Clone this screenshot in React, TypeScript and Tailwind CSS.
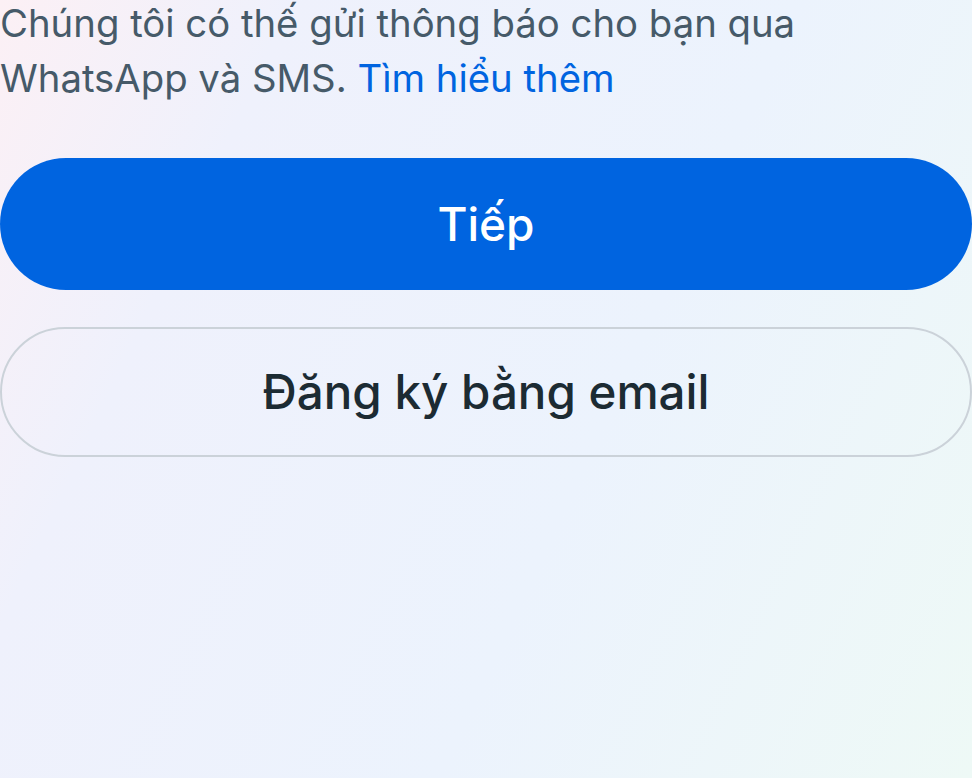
import React from "react";

export default function App() {
  return (
    <div
      className="w-[972px] h-[778px] overflow-hidden bg-[linear-gradient(115deg,#fcf0f5_0%,#eff1fc_22%,#ecf3fd_60%,#eef9f6_100%)]"
      style={{ fontFamily: "Inter, 'Noto Sans', sans-serif" }}
    >
      <div className="flex flex-col">
        <p className="-mt-[4px] text-[38.3px] leading-[55px] text-[#465a69]">
          Chúng tôi có thế gửi thông báo cho bạn qua WhatsApp và SMS.{" "}
          <span className="text-[#0064e0]">Tìm hiểu thêm</span>
        </p>
        <button className="mt-[52px] h-[132px] w-full rounded-full bg-[#0064e0] text-white text-[46px] font-medium">
          Tiếp
        </button>
        <button className="mt-[37px] h-[130px] w-full rounded-full border-2 border-[#cbd2d9] text-[#1c2b33] text-[47.5px] font-medium">
          Đăng ký bằng email
        </button>
      </div>
    </div>
  );
}
